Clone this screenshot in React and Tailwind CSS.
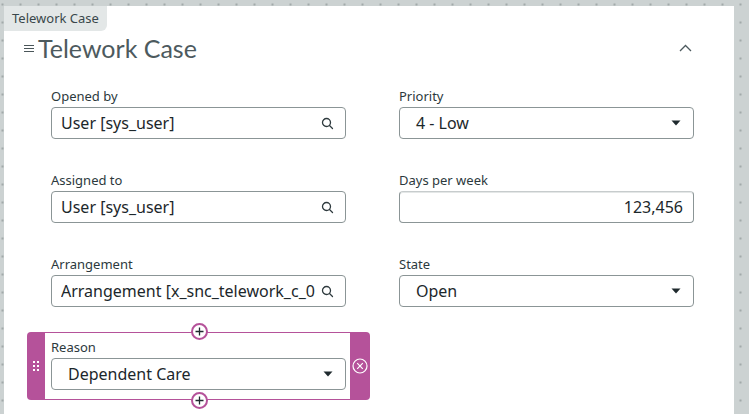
import React from 'react';

function SearchIcon() {
    return (
        <svg width="13" height="13" viewBox="0 0 13 13" fill="none" stroke="#2e3a3e" strokeWidth="1.3">
            <circle cx="5.5" cy="5.5" r="4" />
            <path d="M8.5 8.5 L11.5 11.5" strokeLinecap="round" />
        </svg>
    );
}

function Caret() {
    return (
        <svg width="10" height="6" viewBox="0 0 10 6">
            <path d="M0.5 0.5 H9.5 L5 5.5 Z" fill="#1f2a2e" />
        </svg>
    );
}

function Field({ label, children }) {
    return (
        <div className="flex flex-col">
            <label className="text-[13px] leading-4 text-[#2c393d] mb-[3px]">{label}</label>
            {children}
        </div>
    );
}

function RefInput({ value }) {
    return (
        <div className="flex items-center h-[32px] w-[295px] border border-[#8b9596] rounded-[4px] pl-[9px] pr-[11px] bg-white">
            <span className="flex-1 min-w-0 overflow-hidden whitespace-nowrap text-[16px] text-[#1c272b]">{value}</span>
            <span className="ml-[4px] shrink-0"><SearchIcon /></span>
        </div>
    );
}

function SelectInput({ value }) {
    return (
        <div className="flex items-center h-[32px] w-[295px] border border-[#8b9596] rounded-[4px] pl-[16px] pr-[12px] bg-white">
            <span className="flex-1 text-[16px] text-[#1c272b]">{value}</span>
            <Caret />
        </div>
    );
}

function NumberInput({ value }) {
    return (
        <div className="flex items-center justify-end h-[32px] w-[295px] border border-[#8b9596] border-t-[#c7cccd] rounded-[4px] pr-[10px] bg-white shadow-[inset_0_1px_0_#e4e7e7]">
            <span className="text-[16px] text-[#1c272b]">{value}</span>
        </div>
    );
}

function PlusCircle() {
    return (
        <div className="w-[17px] h-[17px] rounded-full bg-white border-2 border-[#b5529a] flex items-center justify-center">
            <svg width="9" height="9" viewBox="0 0 9 9" stroke="#1f2a2e" strokeWidth="1.3">
                <path d="M4.5 0.5 V8.5 M0.5 4.5 H8.5" />
            </svg>
        </div>
    );
}

export default function App() {
    return (
        <div
            className="w-[749px] h-[414px] overflow-hidden flex flex-col bg-[#ccd2d2] bg-[image:radial-gradient(#a2aaaa_1px,transparent_1.6px)] bg-[size:18px_18px] bg-[position:-6.5px_-4.5px]"
            style={{ fontFamily: '"Noto Sans", "Open Sans", sans-serif' }}
        >
            <div className="ml-[4px] mt-[6px] w-[730px] flex-1 bg-white flex flex-col">
                {/* tab */}
                <div className="self-start h-[25px] flex items-center px-[8px] bg-[#e3e7e7] rounded-br-[6px] text-[13px] text-[#3a474b]">
                    Telework Case
                </div>

                {/* title row */}
                <div className="flex items-center h-[32px] mt-[1px] pl-[20px] pr-[42px]">
                    <svg width="10" height="8" viewBox="0 0 10 8" stroke="#4a5659" strokeWidth="1" className="mr-[4px] mt-[2px]">
                        <path d="M0 0.5 H10 M0 3.5 H10 M0 6.5 H10" />
                    </svg>
                    <h1 className="flex-1 text-[25px] leading-8 text-[#4d5a5e]" style={{ fontFamily: 'Lato, sans-serif' }}>
                        Telework Case
                    </h1>
                    <svg width="13" height="8" viewBox="0 0 13 8" fill="none" stroke="#4d5a5e" strokeWidth="1.3">
                        <path d="M1 7 L6.5 1.5 L12 7" />
                    </svg>
                </div>

                {/* form */}
                <div className="grid grid-cols-[295px_295px] gap-x-[53px] gap-y-[33px] ml-[47px] mt-[24px]">
                    <Field label="Opened by"><RefInput value="User [sys_user]" /></Field>
                    <Field label="Priority"><SelectInput value="4 - Low" /></Field>
                    <Field label="Assigned to"><RefInput value="User [sys_user]" /></Field>
                    <Field label="Days per week"><NumberInput value="123,456" /></Field>
                    <Field label="Arrangement"><RefInput value="Arrangement [x_snc_telework_c_0" /></Field>
                    <Field label="State"><SelectInput value="Open" /></Field>
                </div>

                {/* selected reason field */}
                <div className="relative ml-[23px] mt-[25px] w-[343px] h-[68px] flex rounded-[4px] bg-[#b5529a]">
                    <div className="w-[18px] flex items-center justify-center">
                        <svg width="6" height="10" viewBox="0 0 6 10" fill="#fff">
                            <rect x="0" y="0" width="2" height="2" />
                            <rect x="4" y="0" width="2" height="2" />
                            <rect x="0" y="4" width="2" height="2" />
                            <rect x="4" y="4" width="2" height="2" />
                            <rect x="0" y="8" width="2" height="2" />
                            <rect x="4" y="8" width="2" height="2" />
                        </svg>
                    </div>
                    <div className="flex-1 bg-white my-[1px] pl-[6px] pt-[6px]">
                        <Field label="Reason"><SelectInput value="Dependent Care" /></Field>
                    </div>
                    <div className="w-[20px] flex items-center justify-center">
                        <svg width="16" height="16" viewBox="0 0 16 16" fill="none" stroke="#fff" strokeWidth="1.2">
                            <circle cx="8" cy="8" r="7" />
                            <path d="M5.2 5.2 L10.8 10.8 M10.8 5.2 L5.2 10.8" />
                        </svg>
                    </div>
                    <div className="absolute left-[164px] -top-[9px]"><PlusCircle /></div>
                    <div className="absolute left-[164px] -bottom-[9px]"><PlusCircle /></div>
                </div>
            </div>
        </div>
    );
}
